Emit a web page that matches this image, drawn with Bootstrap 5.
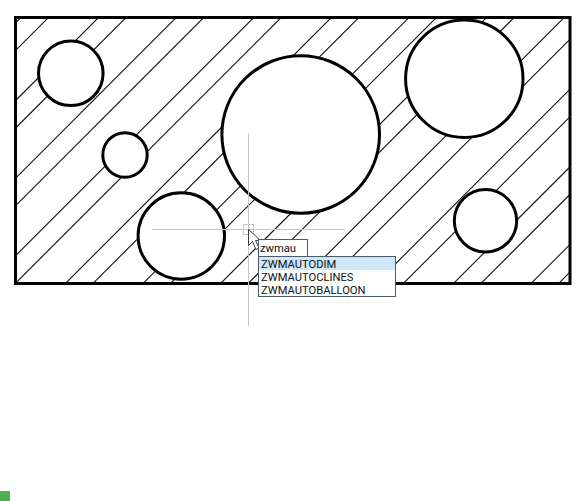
<!DOCTYPE html>
<html lang="en">
<head>
    <meta charset="UTF-8">
    <title>ZWCAD drawing</title>
    <link href="https://cdn.jsdelivr.net/npm/bootstrap@5.3.0/dist/css/bootstrap.min.css" rel="stylesheet">
    <style>
        html, body { height: 100%; background: #fff; overflow: hidden; }
        .cad-canvas { width: 587px; height: 501px; }
        .cad-drawing { display: block; }
        .hatch line { stroke: #111; stroke-width: 1.1; }
        .holes circle { fill: #fff; stroke: #000; stroke-width: 3; }
        .cross { stroke: #c6c6c6; stroke-width: 1; fill: none; shape-rendering: crispEdges; }
        .cmd-input, .cmd-list { font-family: Roboto, sans-serif; font-size: 11.2px; color: #111; }
        .cmd-input { left: 258px; top: 239px; width: 50px; height: 18px; border: 1px solid #4b5a68; padding: 2px 0 0 1px; background: #fff; line-height: 14px; }
        .cmd-list { left: 258px; top: 256px; width: 138px; border: 1px solid #4b5a68; border-radius: 0; background: #fff; }
        .cmd-list .list-group-item { height: 13px; padding: 1px 0 0 2px; border: 0; border-radius: 0; background: transparent; color: inherit; font-size: inherit; line-height: 13px; }
        .cmd-list .list-group-item.active { background: #cde8f8; color: #111; }
        .status-mark { width: 10px; height: 10px; background: #4caf50; }
    </style>
</head>
<body class="m-0">
<div class="cad-canvas position-relative">
    <svg class="cad-drawing" width="587" height="501" viewBox="0 0 587 501">
        <defs>
            <clipPath id="frame"><rect x="15" y="17" width="555" height="267"/></clipPath>
        </defs>
        <!-- hatch: two line sets, x + y = constant, period 77.6 -->
        <g class="hatch" clip-path="url(#frame)">
            <line x1="38.5" y1="0" x2="0" y2="38.5"/>
            <line x1="66" y1="0" x2="0" y2="66"/>
            <line x1="116.1" y1="0" x2="0" y2="116.1"/>
            <line x1="143.6" y1="0" x2="0" y2="143.6"/>
            <line x1="193.7" y1="0" x2="0" y2="193.7"/>
            <line x1="221.2" y1="0" x2="0" y2="221.2"/>
            <line x1="271.3" y1="0" x2="0" y2="271.3"/>
            <line x1="298.8" y1="0" x2="0" y2="298.8"/>
            <line x1="348.9" y1="0" x2="0" y2="348.9"/>
            <line x1="376.4" y1="0" x2="0" y2="376.4"/>
            <line x1="426.5" y1="0" x2="0" y2="426.5"/>
            <line x1="454" y1="0" x2="0" y2="454"/>
            <line x1="504.1" y1="0" x2="0" y2="504.1"/>
            <line x1="531.6" y1="0" x2="0" y2="531.6"/>
            <line x1="581.7" y1="0" x2="0" y2="581.7"/>
            <line x1="609.2" y1="0" x2="0" y2="609.2"/>
            <line x1="659.3" y1="0" x2="0" y2="659.3"/>
            <line x1="686.8" y1="0" x2="0" y2="686.8"/>
            <line x1="736.9" y1="0" x2="0" y2="736.9"/>
            <line x1="764.4" y1="0" x2="0" y2="764.4"/>
            <line x1="814.5" y1="0" x2="0" y2="814.5"/>
            <line x1="842" y1="0" x2="0" y2="842"/>
        </g>
        <rect x="15.5" y="17.5" width="554.5" height="266" fill="none" stroke="#000" stroke-width="3"/>
        <g class="holes">
            <circle cx="70.8" cy="73.3" r="32.3"/>
            <circle cx="125" cy="155" r="22.2"/>
            <circle cx="300.7" cy="134.5" r="78.8"/>
            <circle cx="464.3" cy="78.8" r="58.7"/>
            <circle cx="181.3" cy="236" r="43.2"/>
            <circle cx="485.5" cy="220.8" r="31.2"/>
        </g>
        <!-- crosshair and pick box -->
        <g class="cross">
            <line x1="248.5" y1="133" x2="248.5" y2="326"/>
            <line x1="152" y1="229.5" x2="345" y2="229.5"/>
            <rect x="243.5" y="224.5" width="10" height="10"/>
        </g>
        <path d="M248.5 229.5V245.5L252.5 241.5L256 249.5L259 248L255.5 240.5H260.5Z" fill="#fff" stroke="#3c3c3c" stroke-width="1" stroke-linejoin="round"/>
    </svg>
    <div class="cmd-input position-absolute">zwmau</div>
    <ul class="list-group cmd-list position-absolute">
        <li class="list-group-item active">ZWMAUTODIM</li>
        <li class="list-group-item">ZWMAUTOCLINES</li>
        <li class="list-group-item">ZWMAUTOBALLOON</li>
    </ul>
    <div class="status-mark position-absolute bottom-0 start-0"></div>
</div>
<script src="https://cdn.jsdelivr.net/npm/bootstrap@5.3.0/dist/js/bootstrap.bundle.min.js"></script>
</body>
</html>
